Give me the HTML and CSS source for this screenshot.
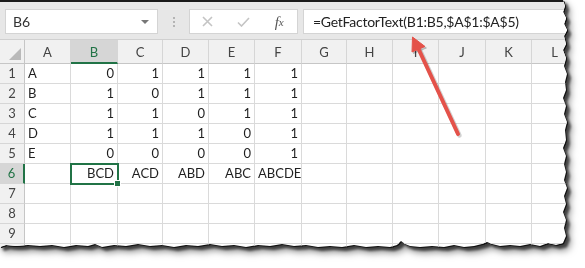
FILE: index.html
```html
<!DOCTYPE html>
<html lang="en">
<head>
    <meta charset="UTF-8">
    <meta name="viewport" content="width=device-width, initial-scale=1.0">
    <title>GetFactorText</title>
    <link rel="stylesheet" href="styles.css">
</head>
<body>
    <div class="shot">
        <div class="sheet">
            <!-- formula bar -->
            <div class="fbar">
                <div class="namebox"><span>B6</span><i class="drop"></i></div>
                <div class="grip"><i></i><i></i><i></i></div>
                <div class="fx-box">
                    <span class="slot">
                        <svg width="11" height="11" viewBox="0 0 11 11"><path d="M1 1L10 10M10 1L1 10" stroke="#c4c4c4" stroke-width="1.6" fill="none"/></svg>
                    </span>
                    <span class="slot">
                        <svg width="13" height="10" viewBox="0 0 13 10"><path d="M1 5.5L4.5 9L12 1" stroke="#c4c4c4" stroke-width="1.6" fill="none"/></svg>
                    </span>
                    <span class="slot fx">f<small>x</small></span>
                </div>
                <div class="formula">=GetFactorText(B1:B5,$A$1:$A$5)</div>
            </div>

            <!-- sheet grid -->
            <div class="grid">
                <div class="corner"><i></i></div>
                <div class="ch">A</div><div class="ch sel">B</div><div class="ch">C</div><div class="ch">D</div><div class="ch">E</div><div class="ch">F</div>
                <div class="ch">G</div><div class="ch">H</div><div class="ch">I</div><div class="ch">J</div><div class="ch">K</div><div class="ch">L</div>

                <div class="rh">1</div><div class="c">A</div><div class="c n">0</div><div class="c n">1</div><div class="c n">1</div><div class="c n">1</div><div class="c n">1</div>
                <div class="c"></div><div class="c"></div><div class="c"></div><div class="c"></div><div class="c"></div><div class="c"></div>

                <div class="rh">2</div><div class="c">B</div><div class="c n">1</div><div class="c n">0</div><div class="c n">1</div><div class="c n">1</div><div class="c n">1</div>
                <div class="c"></div><div class="c"></div><div class="c"></div><div class="c"></div><div class="c"></div><div class="c"></div>

                <div class="rh">3</div><div class="c">C</div><div class="c n">1</div><div class="c n">1</div><div class="c n">0</div><div class="c n">1</div><div class="c n">1</div>
                <div class="c"></div><div class="c"></div><div class="c"></div><div class="c"></div><div class="c"></div><div class="c"></div>

                <div class="rh">4</div><div class="c">D</div><div class="c n">1</div><div class="c n">1</div><div class="c n">1</div><div class="c n">0</div><div class="c n">1</div>
                <div class="c"></div><div class="c"></div><div class="c"></div><div class="c"></div><div class="c"></div><div class="c"></div>

                <div class="rh">5</div><div class="c">E</div><div class="c n">0</div><div class="c n">0</div><div class="c n">0</div><div class="c n">0</div><div class="c n">1</div>
                <div class="c"></div><div class="c"></div><div class="c"></div><div class="c"></div><div class="c"></div><div class="c"></div>

                <div class="rh sel">6</div><div class="c"></div><div class="c n act">BCD</div><div class="c n">ACD</div><div class="c n">ABD</div><div class="c n">ABC</div><div class="c n">ABCDE</div>
                <div class="c"></div><div class="c"></div><div class="c"></div><div class="c"></div><div class="c"></div><div class="c"></div>

                <div class="rh">7</div><div class="c"></div><div class="c"></div><div class="c"></div><div class="c"></div><div class="c"></div><div class="c"></div>
                <div class="c"></div><div class="c"></div><div class="c"></div><div class="c"></div><div class="c"></div><div class="c"></div>

                <div class="rh">8</div><div class="c"></div><div class="c"></div><div class="c"></div><div class="c"></div><div class="c"></div><div class="c"></div>
                <div class="c"></div><div class="c"></div><div class="c"></div><div class="c"></div><div class="c"></div><div class="c"></div>

                <div class="rh">9</div><div class="c"></div><div class="c"></div><div class="c"></div><div class="c"></div><div class="c"></div><div class="c"></div>
                <div class="c"></div><div class="c"></div><div class="c"></div><div class="c"></div><div class="c"></div><div class="c"></div>

                <div class="rh"></div><div class="c"></div><div class="c"></div><div class="c"></div><div class="c"></div><div class="c"></div><div class="c"></div>
                <div class="c"></div><div class="c"></div><div class="c"></div><div class="c"></div><div class="c"></div><div class="c"></div>
            </div>
        </div>
    </div>

    <!-- callout arrow -->
    <svg class="arrow" width="585" height="268" viewBox="0 0 585 268">
        <g class="arrow-shadow" transform="translate(1.5 1.5)">
            <path d="M458 134L419 50" stroke-width="4.5" stroke-linecap="round"/>
            <path d="M412.5 37L425 46.5L412 52Z"/>
        </g>
        <g class="arrow-body">
            <path d="M458 134L419 50" stroke-width="4" stroke-linecap="round"/>
            <path d="M412.5 37L425 46.5L412 52Z"/>
        </g>
    </svg>
</body>
</html>
```

FILE: styles.css
```css
body{
    margin:0;
    background:#fff;
    font-family:Lato,"Open Sans",sans-serif;
    color:#1f1f1f;
}
/* torn screenshot with shadow */
.shot{
    width:585px;
    height:268px;
    filter:drop-shadow(1px 1px 0 #111) drop-shadow(3px 3px 1px rgba(0,0,0,.55)) drop-shadow(2px 3px 3px rgba(0,0,0,.5));
}
.sheet{
    width:570px;
    height:252px;
    overflow:hidden;
    background:#fff;
    clip-path:polygon(0 0,563px 0,565px 6px,563px 12px,566px 18px,564px 24px,567px 30px,564px 36px,566px 44px,563px 50px,566px 58px,564px 66px,567px 74px,565px 82px,566px 90px,563px 98px,566px 106px,564px 114px,567px 122px,565px 130px,566px 140px,563px 148px,566px 156px,564px 164px,566px 172px,564px 180px,567px 188px,564px 196px,566px 204px,563px 212px,566px 220px,564px 228px,566px 236px,563px 243px,556px 245px,548px 243px,540px 246px,530px 244px,520px 246px,510px 245px,500px 246px,492px 244px,487px 242px,482px 244px,474px 246px,464px 247px,454px 245px,444px 247px,432px 246px,420px 247px,410px 246px,405px 244px,401px 241px,397px 245px,390px 247px,378px 246px,366px 247px,354px 245px,342px 247px,330px 246px,318px 247px,306px 245px,294px 246px,282px 244px,270px 246px,258px 245px,246px 247px,234px 245px,222px 246px,210px 244px,198px 246px,186px 245px,174px 247px,162px 245px,150px 246px,138px 244px,126px 246px,114px 245px,102px 247px,95px 244px,88px 246px,76px 245px,64px 247px,52px 245px,40px 246px,28px 245px,16px 246px,6px 245px,0 247px);
}

/* formula bar */
.fbar{
    height:40px;
    box-sizing:border-box;
    border-top:2px solid #1a1a1a;
    border-bottom:1px solid #d0d0d0;
    background:#e7e7e7;
    display:flex;
    align-items:flex-start;
    padding:7px 0 0 5px;
    font-size:14px;
}
.namebox{
    width:153px;
    height:25px;
    box-sizing:border-box;
    background:#fff;
    border:1px solid #d4d4d4;
    display:flex;
    align-items:center;
    justify-content:space-between;
    padding:0 8px 0 7px;
    color:#333;
}
.drop{
    width:0;
    height:0;
    border-left:4px solid transparent;
    border-right:4px solid transparent;
    border-top:4px solid #777;
}
.grip{
    width:31px;
    height:25px;
    display:flex;
    flex-direction:column;
    align-items:center;
    justify-content:center;
    gap:2px;
}
.grip i{
    width:2px;
    height:2px;
    background:#b4b4b4;
}
.fx-box{
    width:109px;
    height:25px;
    box-sizing:border-box;
    background:#fff;
    border:1px solid #d4d4d4;
    display:flex;
    align-items:center;
}
.slot{
    width:36px;
    display:flex;
    justify-content:center;
    align-items:center;
}
.fx{
    font-family:"Liberation Serif",serif;
    font-style:italic;
    font-size:15px;
    color:#555;
    padding-top:1px;
}
.fx small{
    font-size:11px;
}
.formula{
    flex:1;
    height:25px;
    box-sizing:border-box;
    margin-left:5px;
    background:#fff;
    border:1px solid #d4d4d4;
    border-right:none;
    padding-left:9px;
    line-height:23px;
    letter-spacing:-0.25px;
    color:#222;
    white-space:nowrap;
}

/* grid */
.grid{
    display:grid;
    grid-template-columns:25px 46px 47px 45px 46px 46px 47px 45px 46px 46px 47px 46px 46px;
    grid-template-rows:24px;
    grid-auto-rows:20px;
    font-size:13px;
}
.corner,.ch,.rh{
    background:#f1f1f1;
    color:#444;
    box-sizing:border-box;
}
.corner{
    border-right:1px solid #c6c6c6;
    border-bottom:1px solid #c6c6c6;
    display:flex;
    justify-content:flex-end;
    align-items:flex-end;
    padding:0 3px 3px 0;
}
.corner i{
    width:0;
    height:0;
    border-left:12px solid transparent;
    border-bottom:12px solid #b9b9b9;
}
.ch{
    border-right:1px solid #d6d6d6;
    border-bottom:1px solid #c6c6c6;
    text-align:center;
    line-height:24px;
}
.ch.sel{
    background:#d6d6d6;
    border-bottom:2px solid #217346;
    color:#217346;
}
.rh{
    border-right:1px solid #c6c6c6;
    border-bottom:1px solid #d6d6d6;
    text-align:center;
    line-height:19px;
}
.rh.sel{
    background:#d6d6d6;
    border-right:2px solid #217346;
    color:#217346;
}
.c{
    box-sizing:border-box;
    border-right:1px solid #dadada;
    border-bottom:1px solid #dadada;
    line-height:19px;
    padding:0 3px;
    white-space:nowrap;
}
.n{
    text-align:right;
}
.act{
    position:relative;
    z-index:1;
    outline:2px solid #217346;
    outline-offset:-1px;
}
.act::after{
    content:"";
    position:absolute;
    right:-4px;
    bottom:-4px;
    width:5px;
    height:5px;
    background:#217346;
    border:1px solid #fff;
}

/* callout arrow over the screenshot */
.arrow{
    position:absolute;
    left:0;
    top:0;
    pointer-events:none;
}
.arrow-shadow path{
    stroke:rgba(0,0,0,.18);
    fill:rgba(0,0,0,.18);
}
.arrow-body path{
    stroke:#e4524a;
    fill:#e4524a;
}
```
